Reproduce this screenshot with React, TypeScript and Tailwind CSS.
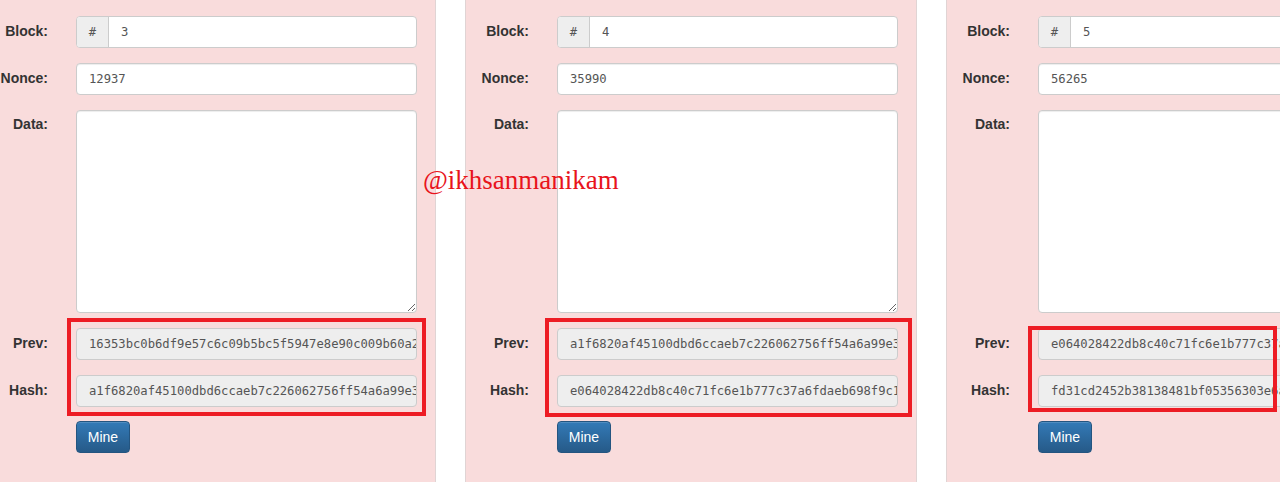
const blocks = [
  {
    n: "3",
    nonce: "12937",
    prev: "16353bc0b6df9e57c6c09b5bc5f5947e8e90c009b60a2e5d1c4b7f38e9a0d21c",
    hash: "a1f6820af45100dbd6ccaeb7c226062756ff54a6a99e3f1b0d7c52a8e4f6b913",
  },
  {
    n: "4",
    nonce: "35990",
    prev: "a1f6820af45100dbd6ccaeb7c226062756ff54a6a99e3f1b0d7c52a8e4f6b913",
    hash: "e064028422db8c40c71fc6e1b777c37a6fdaeb698f9c1d3e5a7b2046f8e9c0ad",
  },
  {
    n: "5",
    nonce: "56265",
    prev: "e064028422db8c40c71fc6e1b777c37a6fdaeb698f9c1d3e5a7b2046f8e9c0ad",
    hash: "fd31cd2452b38138481bf05356303e6a9b2c7d4e1f80a53c6b9d2e7f104a8c5b",
  },
];

const mono = "font-['DejaVu_Sans_Mono','Liberation_Mono',monospace] text-[12.2px] text-[#555]";

function Label({ children }: { children: string }) {
  return (
    <div className="w-[63px] shrink-0 text-right pt-[5px] text-[14px] leading-5 font-bold text-[#333]">
      {children}
    </div>
  );
}

function Block({ b }: { b: (typeof blocks)[number] }) {
  return (
    <div className="relative w-[452px] shrink-0 h-[482px] bg-[#f9dcdc] border-x border-[#e0d4d4] pt-[16px]">
      <div className="flex flex-col gap-[15px]">
        <div className="flex">
          <Label>Block:</Label>
          <div className="ml-[28px] w-[341px] h-[32px] flex rounded-[4px] border border-[#ccc] bg-white overflow-hidden">
            <div className={`w-[32px] bg-[#eee] border-r border-[#ccc] flex items-center justify-center ${mono}`}>#</div>
            <div className={`flex items-center pl-[12px] ${mono}`}>{b.n}</div>
          </div>
        </div>
        <div className="flex">
          <Label>Nonce:</Label>
          <div className={`ml-[28px] w-[341px] h-[32px] flex items-center pl-[12px] rounded-[4px] border border-[#ccc] bg-white shadow-[inset_0_1px_1px_rgba(0,0,0,0.075)] ${mono}`}>
            {b.nonce}
          </div>
        </div>
        <div className="flex">
          <div className="w-[63px] shrink-0 text-right pt-[4px] text-[14px] leading-5 font-bold text-[#333]">Data:</div>
          <textarea
            readOnly
            className="ml-[28px] w-[341px] h-[203px] rounded-[4px] border border-[#ccc] bg-white shadow-[inset_0_1px_1px_rgba(0,0,0,0.075)] outline-none resize-y"
          />
        </div>
        <div className="flex">
          <Label>Prev:</Label>
          <div className={`ml-[28px] w-[341px] h-[32px] flex items-center pl-[12px] rounded-[4px] border border-[#ccc] bg-[#eee] overflow-hidden whitespace-nowrap ${mono}`}>
            {b.prev}
          </div>
        </div>
        <div className="flex">
          <Label>Hash:</Label>
          <div className={`ml-[28px] w-[341px] h-[32px] flex items-center pl-[12px] rounded-[4px] border border-[#ccc] bg-[#eee] overflow-hidden whitespace-nowrap ${mono}`}>
            {b.hash}
          </div>
        </div>
      </div>
      <div className="mt-[14px] ml-[91px]">
        <button className="w-[54px] h-[32px] rounded-[4px] border border-[#245580] bg-gradient-to-b from-[#337ab7] to-[#265a88] text-white text-[14px] shadow-[inset_0_1px_0_rgba(255,255,255,0.15)]">
          Mine
        </button>
      </div>
    </div>
  );
}

export default function App() {
  return (
    <div className="relative w-[1280px] h-[482px] overflow-hidden bg-white font-['Liberation_Sans',Arial,sans-serif]">
      <div className="flex gap-[29px] ml-[-16px]">
        {blocks.map((b) => (
          <Block key={b.n} b={b} />
        ))}
      </div>

      {/* annotation boxes */}
      <div className="absolute left-[67px] top-[318px] w-[359px] h-[98px] border-[4px] border-[#ed1c24]" />
      <div className="absolute left-[545px] top-[318px] w-[367px] h-[99px] border-[4px] border-[#ed1c24]" />
      <div className="absolute left-[1028px] top-[326px] w-[249px] h-[86px] border-[4px] border-[#ed1c24]" />

      <div className="absolute left-[423px] top-[162px] text-[27px] leading-[36px] text-[#e8141c] font-['Liberation_Serif','Times_New_Roman',serif]">
        @ikhsanmanikam
      </div>
    </div>
  );
}
